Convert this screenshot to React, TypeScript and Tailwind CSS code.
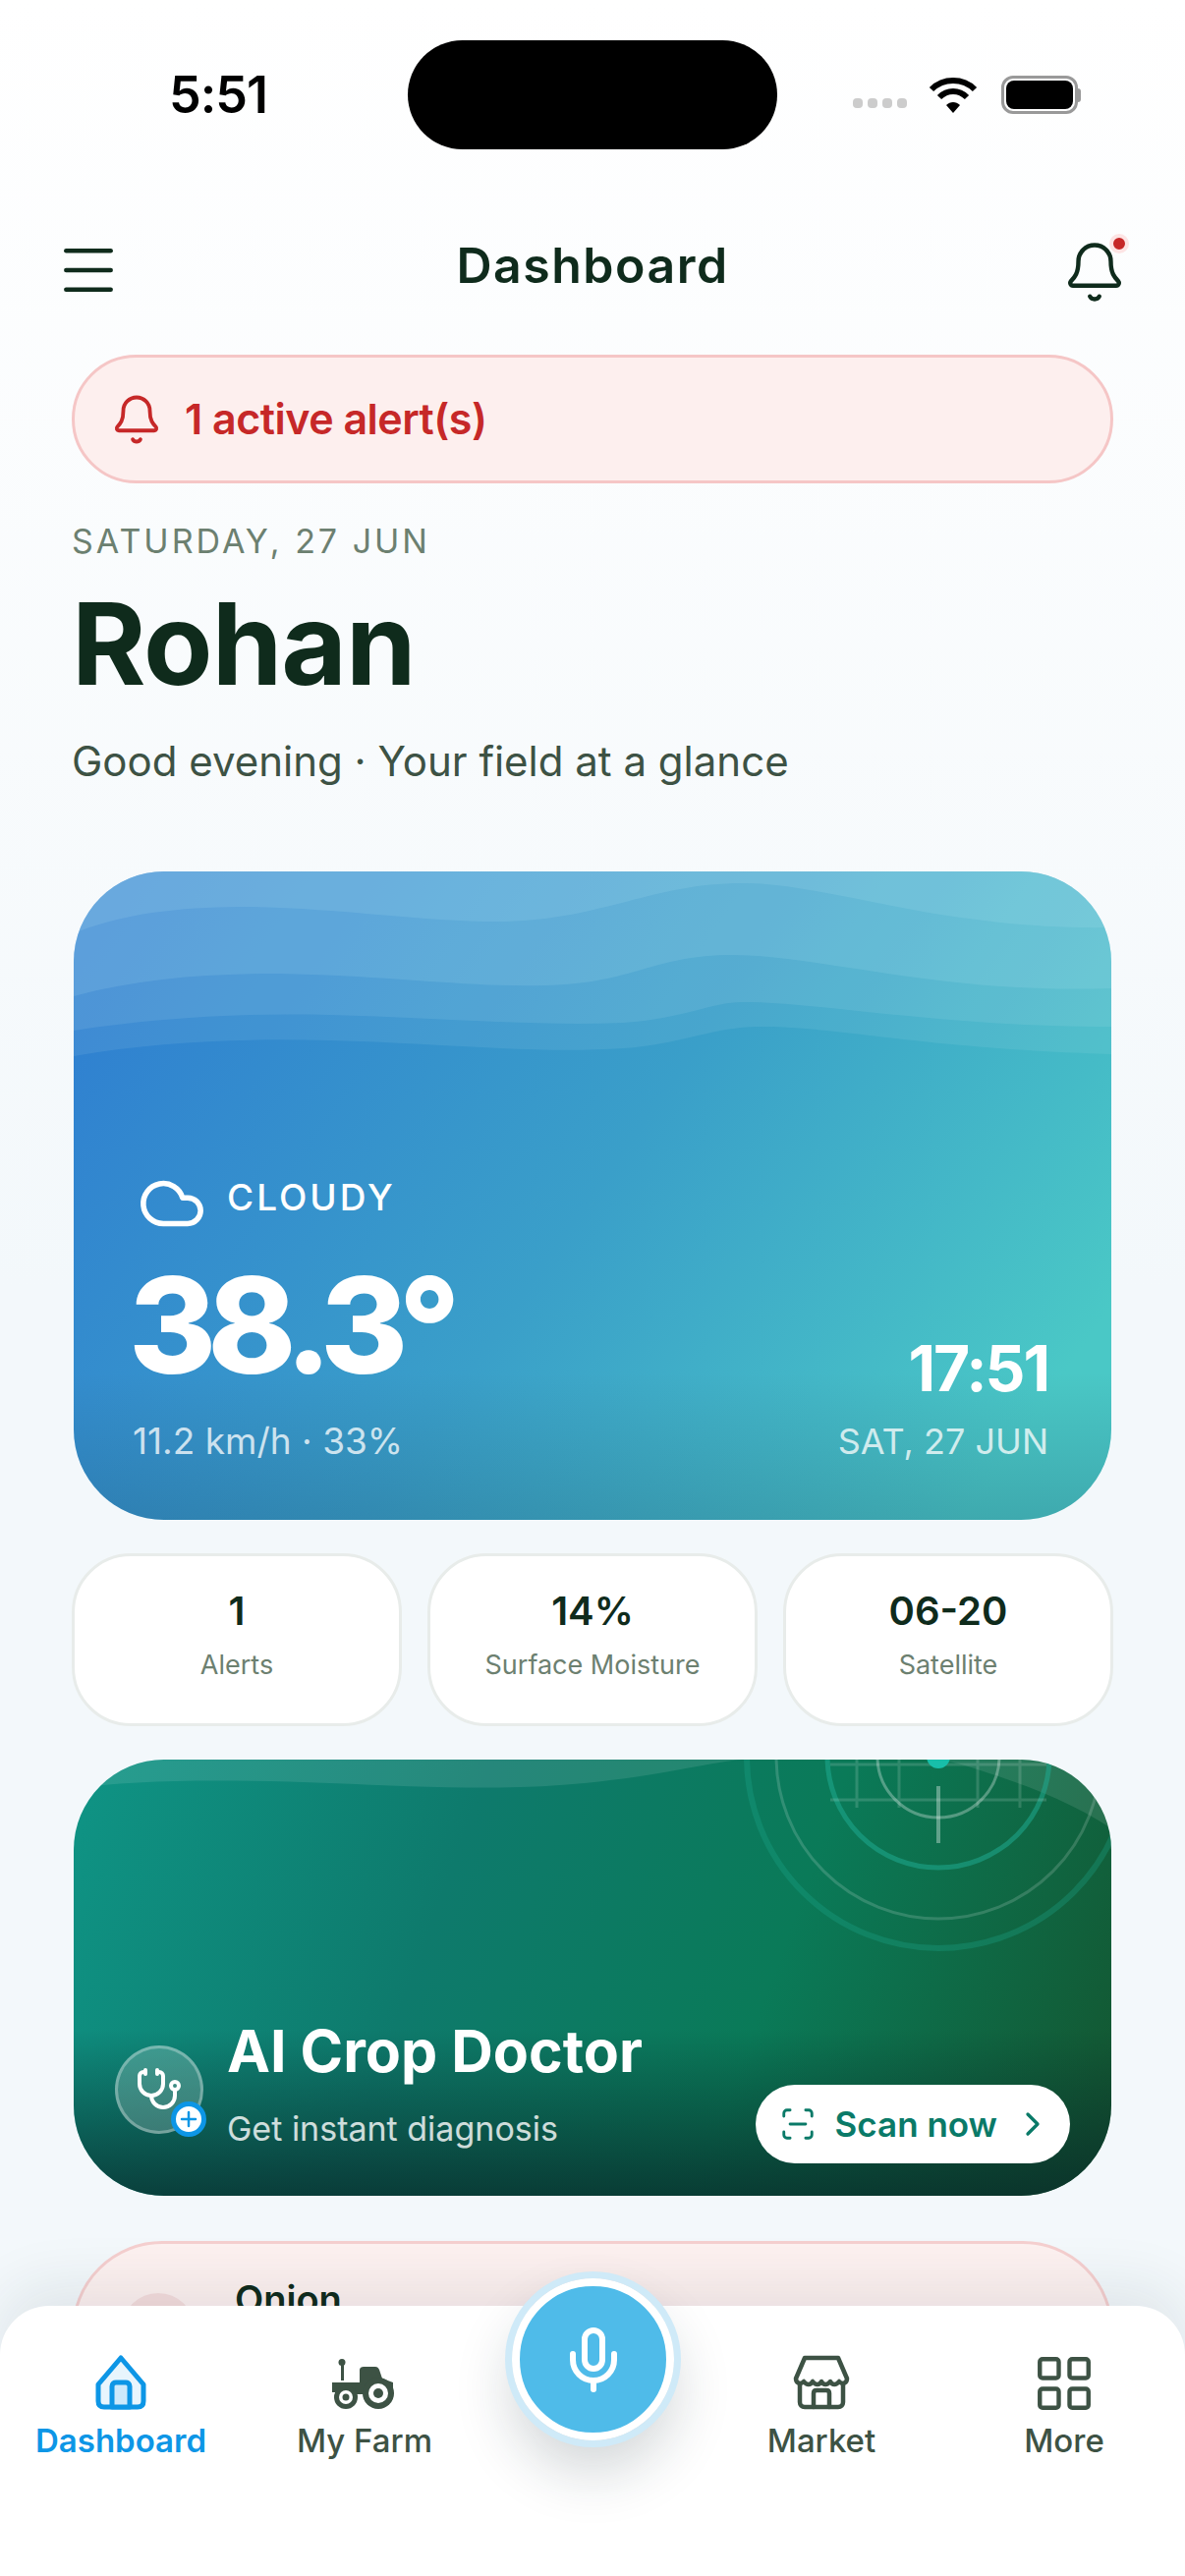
import React from 'react';
import { Bell, ChevronRight, Cloud, LayoutGrid, Menu, Mic, Plus, ScanLine, Stethoscope } from 'lucide-react';

const stats = [
	{ value: '1', label: 'Alerts' },
	{ value: '14%', label: 'Surface Moisture' },
	{ value: '06-20', label: 'Satellite' },
];

const WeatherWaves = () => (
	<svg className="absolute inset-0 w-full h-full" viewBox="0 0 1056 660" preserveAspectRatio="none" fill="#c4f0f4">
		<path opacity="0.1" d="M0 188C90 172 180 170 260 172C380 175 470 186 560 180C620 176 650 158 700 158C780 158 860 180 1056 186V0H0Z" />
		<path opacity="0.11" d="M0 162C90 148 180 144 260 146C380 149 470 158 560 154C620 150 650 133 680 133C760 133 880 158 1056 158V0H0Z" />
		<path opacity="0.13" d="M0 127C70 108 140 104 210 104C320 106 400 118 480 116C570 114 590 85 670 85C760 85 880 125 1056 119V0H0Z" />
		<path opacity="0.13" d="M5 61C60 40 120 36 180 36C280 38 360 52 440 51C540 48 590 12 680 12C770 12 880 60 1056 57V0H0Z" />
	</svg>
);

const DoctorRings = () => (
	<svg className="absolute inset-0 w-full h-full" viewBox="0 0 1056 444" preserveAspectRatio="none" fill="none">
		<path fill="#fff" opacity="0.1" d="M0 30C60 20 160 20 260 24C360 28 440 32 520 24C600 16 640 4 680 0H1056V70C1010 40 960 22 900 4C860 -6 700 -6 0 0Z" />
		<circle cx="880" cy="-3" r="62" stroke="#fff" strokeOpacity="0.3" strokeWidth="3" />
		<circle cx="880" cy="-3" r="113" stroke="#1fa98f" strokeOpacity="0.55" strokeWidth="5" />
		<circle cx="880" cy="-3" r="165" stroke="#fff" strokeOpacity="0.16" strokeWidth="3" />
		<circle cx="880" cy="-3" r="195" stroke="#1fa98f" strokeOpacity="0.3" strokeWidth="6" />
		<g stroke="#fff" strokeOpacity="0.15" strokeWidth="3">
			<path d="M770 5H990M770 41H990M797 0V49M840 0V49M920 0V49M963 0V49" />
		</g>
		<path d="M880 27V85" stroke="#fff" strokeOpacity="0.35" strokeWidth="4" />
		<circle cx="880" cy="-3" r="12" fill="#18bfa9" />
	</svg>
);

const WifiIcon = () => (
	<svg width="50" height="38" viewBox="0 0 50 38" fill="none" stroke="#000" strokeWidth="6">
		<path d="M3 13C15 1 35 1 47 13" />
		<path d="M11 21C19 13 31 13 39 21" />
		<path d="M18 29L25 37L32 29C28 25 22 25 18 29Z" fill="#000" stroke="none" />
	</svg>
);

const HomeIcon = () => (
	<svg width="54" height="56" viewBox="0 0 54 56" fill="none" stroke="#0d96e6" strokeWidth="5" strokeLinejoin="round">
		<path d="M27 3L50 30V47C50 51 48 53 44 53H10C6 53 4 51 4 47V30Z" fill="#e8f5fd" />
		<path d="M18 53V32C18 29 20 28 22 28H32C34 28 36 29 36 32V53Z" fill="#cde9fb" />
	</svg>
);

const TractorIcon = () => (
	<svg width="66" height="52" viewBox="0 0 66 52" fill="#3d5244">
		<path d="M9 4H12V22H9Z" />
		<circle cx="10" cy="3.5" r="3.5" />
		<path d="M0 24H28V11C28 9 30 8 32 8H44C46 8 47 9 48 11L51 20L62 24V32H40V36H18V34H0Z" />
		<circle cx="14" cy="39" r="12" />
		<circle cx="14" cy="39" r="7" fill="#fff" />
		<circle cx="14" cy="39" r="3.5" />
		<circle cx="47" cy="35" r="16" />
		<circle cx="47" cy="35" r="10" fill="#fff" />
		<circle cx="47" cy="35" r="5" />
	</svg>
);

const StoreIcon = () => (
	<svg width="58" height="56" viewBox="0 0 58 56" fill="none" stroke="#3d5244" strokeWidth="4.5" strokeLinejoin="round" strokeLinecap="round">
		<path d="M12 3H46L55 24C55 28 51 31 47 27C44 31 40 31 38 27C35 31 31 31 29 27C27 31 23 31 20 27C18 31 14 31 11 27C7 31 3 28 3 24Z" />
		<path d="M7 29V48C7 51 9 53 12 53H46C49 53 51 51 51 48V29" />
		<path d="M21 53V39C21 37 22 36 24 36H34C36 36 37 37 37 39V53" />
	</svg>
);

const NavItem = ({ icon, label, active = false }: { icon: React.ReactNode; label: string; active?: boolean }) => (
	<div className="flex flex-col items-center w-[172px]">
		<div className="h-[60px] flex items-end justify-center">{icon}</div>
		<span className={`mt-[11px] text-[33px] leading-[40px] ${active ? 'text-[#0d96e6] font-semibold' : 'text-[#3d5244] font-medium'}`}>
			{label}
		</span>
	</div>
);

export default function App() {
	return (
		<div className="relative w-[1206px] h-[2622px] overflow-hidden bg-[linear-gradient(180deg,#ffffff_0%,#f3f8fb_50%,#f3f8fb_100%)] font-['Inter',sans-serif]">
			{/* Status bar */}
			<div className="flex items-center justify-between h-[111px] mt-[41px] pl-[172px] pr-[106px]">
				<span className="w-[243px] text-[52px] font-semibold text-black tracking-[-1px]">5:51</span>
				<div className="w-[376px] h-[111px] rounded-full bg-black" />
				<div className="flex items-center w-[309px] justify-end">
					<div className="flex gap-[5px] mt-[16px] mr-[22px]">
						{[0, 1, 2, 3].map((i) => (
							<span key={i} className="w-[10px] h-[10px] rounded-[4px] bg-[#cccccc]" />
						))}
					</div>
					<WifiIcon />
					<div className="flex items-center ml-[24px]">
						<div className="w-[78px] h-[39px] rounded-[12px] border-[3px] border-[#999999] p-[2px]">
							<div className="w-full h-full rounded-[8px] bg-black" />
						</div>
						<div className="w-[3px] h-[14px] rounded-r-full bg-[#999999]" />
					</div>
				</div>
			</div>

			<main className="px-[73px]">
				{/* Header */}
				<header className="flex items-center justify-between h-[80px] mt-[83px]">
					<div className="w-[80px]">
						<Menu className="text-[#0f2b1c] -ml-[17px]" size={68} strokeWidth={1.6} />
					</div>
					<h1 className="mb-[10px] text-[50px] font-semibold text-[#0f2b1c] tracking-[1.5px]">Dashboard</h1>
					<div className="w-[80px] flex justify-end">
						<div className="relative -mr-[14px] mt-[4px]">
							<Bell className="text-[#0f2b1c]" size={66} strokeWidth={1.6} />
							<span className="absolute top-[-6px] right-[-2px] w-[20px] h-[20px] rounded-full bg-[#c62828] border-[4px] border-[#fde4e4]" />
						</div>
					</div>
				</header>

				{/* Alert */}
				<div className="flex items-center h-[131px] mt-[46px] pl-[36px] rounded-full border-[3px] border-[#f5c6c6] bg-[#fdefee]">
					<Bell className="text-[#c62828]" size={54} strokeWidth={1.7} />
					<span className="ml-[22px] text-[43px] font-semibold text-[#c62828] tracking-[-0.5px]">1 active alert(s)</span>
				</div>

				{/* Greeting */}
				<p className="mt-[39px] text-[34px] leading-[40px] tracking-[3px] text-[#6c8070]">SATURDAY, 27 JUN</p>
				<h2 className="mt-[20px] text-[115px] leading-[130px] font-bold text-[#0f2b1c] tracking-[-1px]">Rohan</h2>
				<p className="mt-[29px] text-[42px] leading-[50px] text-[#3d5244]">Good evening · Your field at a glance</p>

				{/* Weather */}
				<section className="relative flex items-end justify-between h-[660px] mt-[87px] mx-[2px] pl-[60px] pr-[64px] pb-[58px] rounded-[92px] overflow-hidden bg-[linear-gradient(125deg,#2f7fd1_5%,#3a9fc9_50%,#4ac8c6_90%)]">
					<div className="absolute inset-x-0 bottom-0 h-[150px] bg-[linear-gradient(180deg,rgba(20,60,90,0)_0%,rgba(20,60,90,0.22)_100%)]" />
					<WeatherWaves />
					<div className="relative text-white">
						<div className="flex items-center h-[60px]">
							<Cloud size={70} strokeWidth={1.9} className="ml-[5px] mt-[12px]" />
							<span className="ml-[21px] text-[37px] font-medium tracking-[3px]">CLOUDY</span>
						</div>
						<p className="mt-[25px] -ml-[4px] text-[136px] leading-[150px] font-extrabold tracking-[-9px]">38.3°</p>
						<p className="mt-[21px] text-[37px] leading-[44px] text-white/75">11.2 km/h · 33%</p>
					</div>
					<div className="relative text-right text-white">
						<p className="text-[64px] leading-[76px] font-bold tracking-[-2px]">17:51</p>
						<p className="mt-[14px] text-[36px] leading-[44px] text-white/75">SAT, 27 JUN</p>
					</div>
				</section>

				{/* Stats */}
				<div className="grid grid-cols-3 gap-[26px] mt-[34px]">
					{stats.map((s) => (
						<div key={s.label} className="flex flex-col items-center h-[176px] pt-[32px] rounded-[60px] border-[3px] border-[#e8ecea] bg-white">
							<span className="text-[40px] leading-[48px] font-semibold text-[#0f2b1c]">{s.value}</span>
							<span className="mt-[14px] text-[27px] leading-[34px] text-[#6c8070]">{s.label}</span>
						</div>
					))}
				</div>

				{/* AI Crop Doctor */}
				<section className="relative flex items-end h-[444px] mt-[34px] mx-[2px] px-[42px] pb-[33px] rounded-[92px] overflow-hidden bg-[linear-gradient(110deg,#0f9485_0%,#0e7a6c_35%,#0a7a58_65%,#14552f_100%)]">
					<div className="absolute inset-x-0 bottom-0 h-[170px] bg-[linear-gradient(180deg,rgba(8,40,40,0)_0%,rgba(8,40,40,0.75)_100%)]" />
					<DoctorRings />
					<div className="relative mb-[30px] w-[90px] h-[90px] flex items-center justify-center rounded-full border-[3px] border-white/30 bg-white/20 shrink-0">
						<Stethoscope className="text-white" size={48} strokeWidth={2} />
						<span className="absolute right-[-6px] bottom-[-6px] w-[36px] h-[36px] flex items-center justify-center rounded-full bg-white border-[5px] border-[#0d96e6]">
							<Plus className="text-[#0d96e6]" size={24} strokeWidth={2.5} />
						</span>
					</div>
					<div className="relative ml-[24px] text-white">
						<h3 className="text-[59px] leading-[68px] font-bold">AI Crop Doctor</h3>
						<p className="mt-[25px] mb-[15px] text-[34px] leading-[40px] text-white/80">Get instant diagnosis</p>
					</div>
					<button className="relative ml-auto flex items-center h-[80px] pl-[24px] pr-[18px] rounded-full bg-white text-[#0a7a68]">
						<ScanLine size={38} strokeWidth={1.8} />
						<span className="ml-[19px] text-[35px] font-semibold">Scan now</span>
						<ChevronRight className="ml-[16px]" size={40} strokeWidth={2} />
					</button>
				</section>

				{/* Crop alert card, cut off by the tab bar */}
				<section className="flex h-[200px] mt-[46px] pl-[48px] pt-[32px] rounded-[92px] border-[3px] border-[#f5cfcf] bg-[#fdf1f0]">
					<div className="w-[74px] h-[74px] mt-[18px] rounded-full bg-[#f5dddd]" />
					<span className="ml-[41px] mt-[3px] text-[38px] leading-[42px] font-semibold text-[#0f2b1c]">Onion</span>
				</section>
			</main>

			{/* Tab bar */}
			<nav className="absolute inset-x-0 bottom-0 h-[275px] flex justify-between px-[37px] pt-[46px] rounded-t-[50px] bg-white shadow-[0_-20px_60px_rgba(20,40,50,0.09)]">
				<div className="flex">
					<NavItem active label="Dashboard" icon={<HomeIcon />} />
					<div className="w-[76px]" />
					<NavItem label="My Farm" icon={<TractorIcon />} />
				</div>
				<div className="flex">
					<NavItem label="Market" icon={<StoreIcon />} />
					<div className="w-[75px]" />
					<NavItem label="More" icon={<LayoutGrid className="text-[#3d5244] mb-[-6px]" size={66} strokeWidth={1.6} />} />
				</div>
			</nav>

			{/* Voice button */}
			<button className="absolute left-[521px] top-[2319px] w-[165px] h-[165px] flex items-center justify-center rounded-full bg-[#4fbbe9] border-[8px] border-white outline-[7px] outline-[#cfeaf8] shadow-[0_30px_60px_rgba(20,40,50,0.2)]">
				<Mic className="text-white" size={72} strokeWidth={2} />
			</button>
		</div>
	);
}
